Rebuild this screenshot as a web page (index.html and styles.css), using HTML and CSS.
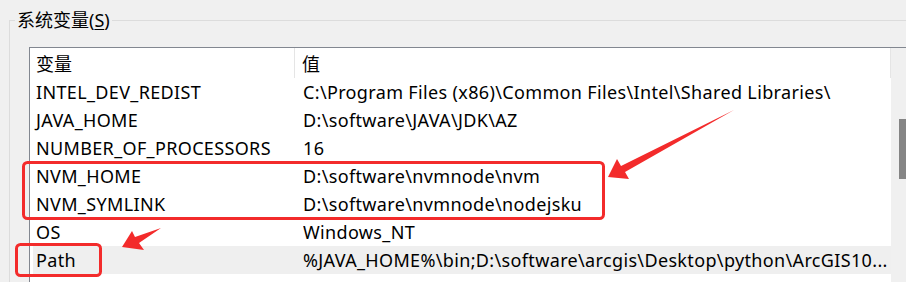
FILE: index.html
```html
<!DOCTYPE html>
<html lang="zh-CN">
<head>
    <meta charset="UTF-8">
    <title>环境变量</title>
    <link rel="stylesheet" href="styles.css">
</head>
<body>
    <fieldset class="group">
        <legend>系统变量(<u>S</u>)</legend>
        <div class="listbox">
            <div class="list">
                <div class="list-head">
                    <div class="col-name">变量</div>
                    <div class="col-value">值</div>
                </div>
                <ul class="rows">
                    <li><span class="col-name">INTEL_DEV_REDIST</span><span class="col-value">C:\Program Files (x86)\Common Files\Intel\Shared Libraries\</span></li>
                    <li><span class="col-name">JAVA_HOME</span><span class="col-value">D:\software\JAVA\JDK\AZ</span></li>
                    <li><span class="col-name">NUMBER_OF_PROCESSORS</span><span class="col-value">16</span></li>
                    <li><span class="col-name">NVM_HOME</span><span class="col-value">D:\software\nvmnode\nvm</span></li>
                    <li><span class="col-name">NVM_SYMLINK</span><span class="col-value">D:\software\nvmnode\nodejsku</span></li>
                    <li><span class="col-name">OS</span><span class="col-value">Windows_NT</span></li>
                    <li class="selected"><span class="col-name">Path</span><span class="col-value">%JAVA_HOME%\bin;D:\software\arcgis\Desktop\python\ArcGIS10...</span></li>
                    <li><span class="col-name">PATHEXT</span><span class="col-value">.COM;.EXE;.BAT;.CMD;.VBS;.VBE;.JS;.JSE;.WSF;.WSH;.MSC</span></li>
                </ul>
            </div>
            <div class="scrollbar"><div class="thumb"></div></div>
        </div>
    </fieldset>

    <!-- red marks drawn over the screenshot -->
    <svg class="marks" width="906" height="282" viewBox="0 0 906 282">
        <rect x="23.5" y="162.5" width="580" height="56" rx="4" fill="none" stroke="#f32b2b" stroke-width="3"/>
        <rect x="16.5" y="244.5" width="84" height="31" rx="4" fill="none" stroke="#f32b2b" stroke-width="3"/>
        <polygon points="734,110 625,172 629,179 608,177 617,159 621,166" fill="#f32b2b"/>
        <polygon points="161,228 139,243 144,250 122,247 132,231 135,237" fill="#f32b2b"/>
    </svg>
</body>
</html>
```

FILE: styles.css
```css
* {
    margin: 0;
    padding: 0;
    box-sizing: border-box;
    list-style: none;
}
body {
    width: 906px;
    height: 282px;
    overflow: hidden;
    position: relative;
    background: #f0f0f0;
    color: #000;
    font-family: "Noto Sans", "Noto Sans CJK SC", sans-serif;
    font-size: 18px;
}
.group {
    margin: 9px 0 0 9px;
    padding: 0 0 0 19px;
    height: 400px;
    border: 1px solid #dcdcdc;
    border-right: none;
    border-bottom: none;
}
.group legend {
    margin-left: -14px;
    padding: 0 2px;
    line-height: 22px;
}
.group legend u {
    text-decoration-thickness: 1px;
    text-underline-offset: 2px;
}
.listbox {
    display: flex;
    margin-top: 16px;
    width: 900px;
    height: 300px;
    background: #fff;
    border-top: 1px solid #828790;
    border-left: 1px solid #828790;
}
.list {
    width: 861px;
}
.list-head {
    display: flex;
    height: 30px;
    line-height: 30px;
    font-family: "Noto Sans CJK SC", sans-serif;
}
.list-head .col-name {
    width: 265px;
    padding-left: 6px;
    border-right: 1px solid #e5e5e5;
}
.list-head .col-value {
    flex: 1;
    padding-left: 7px;
    border-right: 1px solid #e5e5e5;
}
.rows {
    padding-left: 3px;
    letter-spacing: 0.35px;
}
.rows li {
    display: flex;
    height: 28px;
    line-height: 28px;
    white-space: nowrap;
}
.rows .col-name {
    width: 270px;
    padding-left: 3px;
}
.rows .col-value {
    flex: 1;
    overflow: hidden;
}
.rows li.selected {
    background: #efefef;
}
.scrollbar {
    width: 17px;
    background: #f0f0f0;
    padding: 71px 0 0 8px;
}
.scrollbar .thumb {
    height: 60px;
    background: #858585;
}
.marks {
    position: absolute;
    left: 0;
    top: 0;
}
```
